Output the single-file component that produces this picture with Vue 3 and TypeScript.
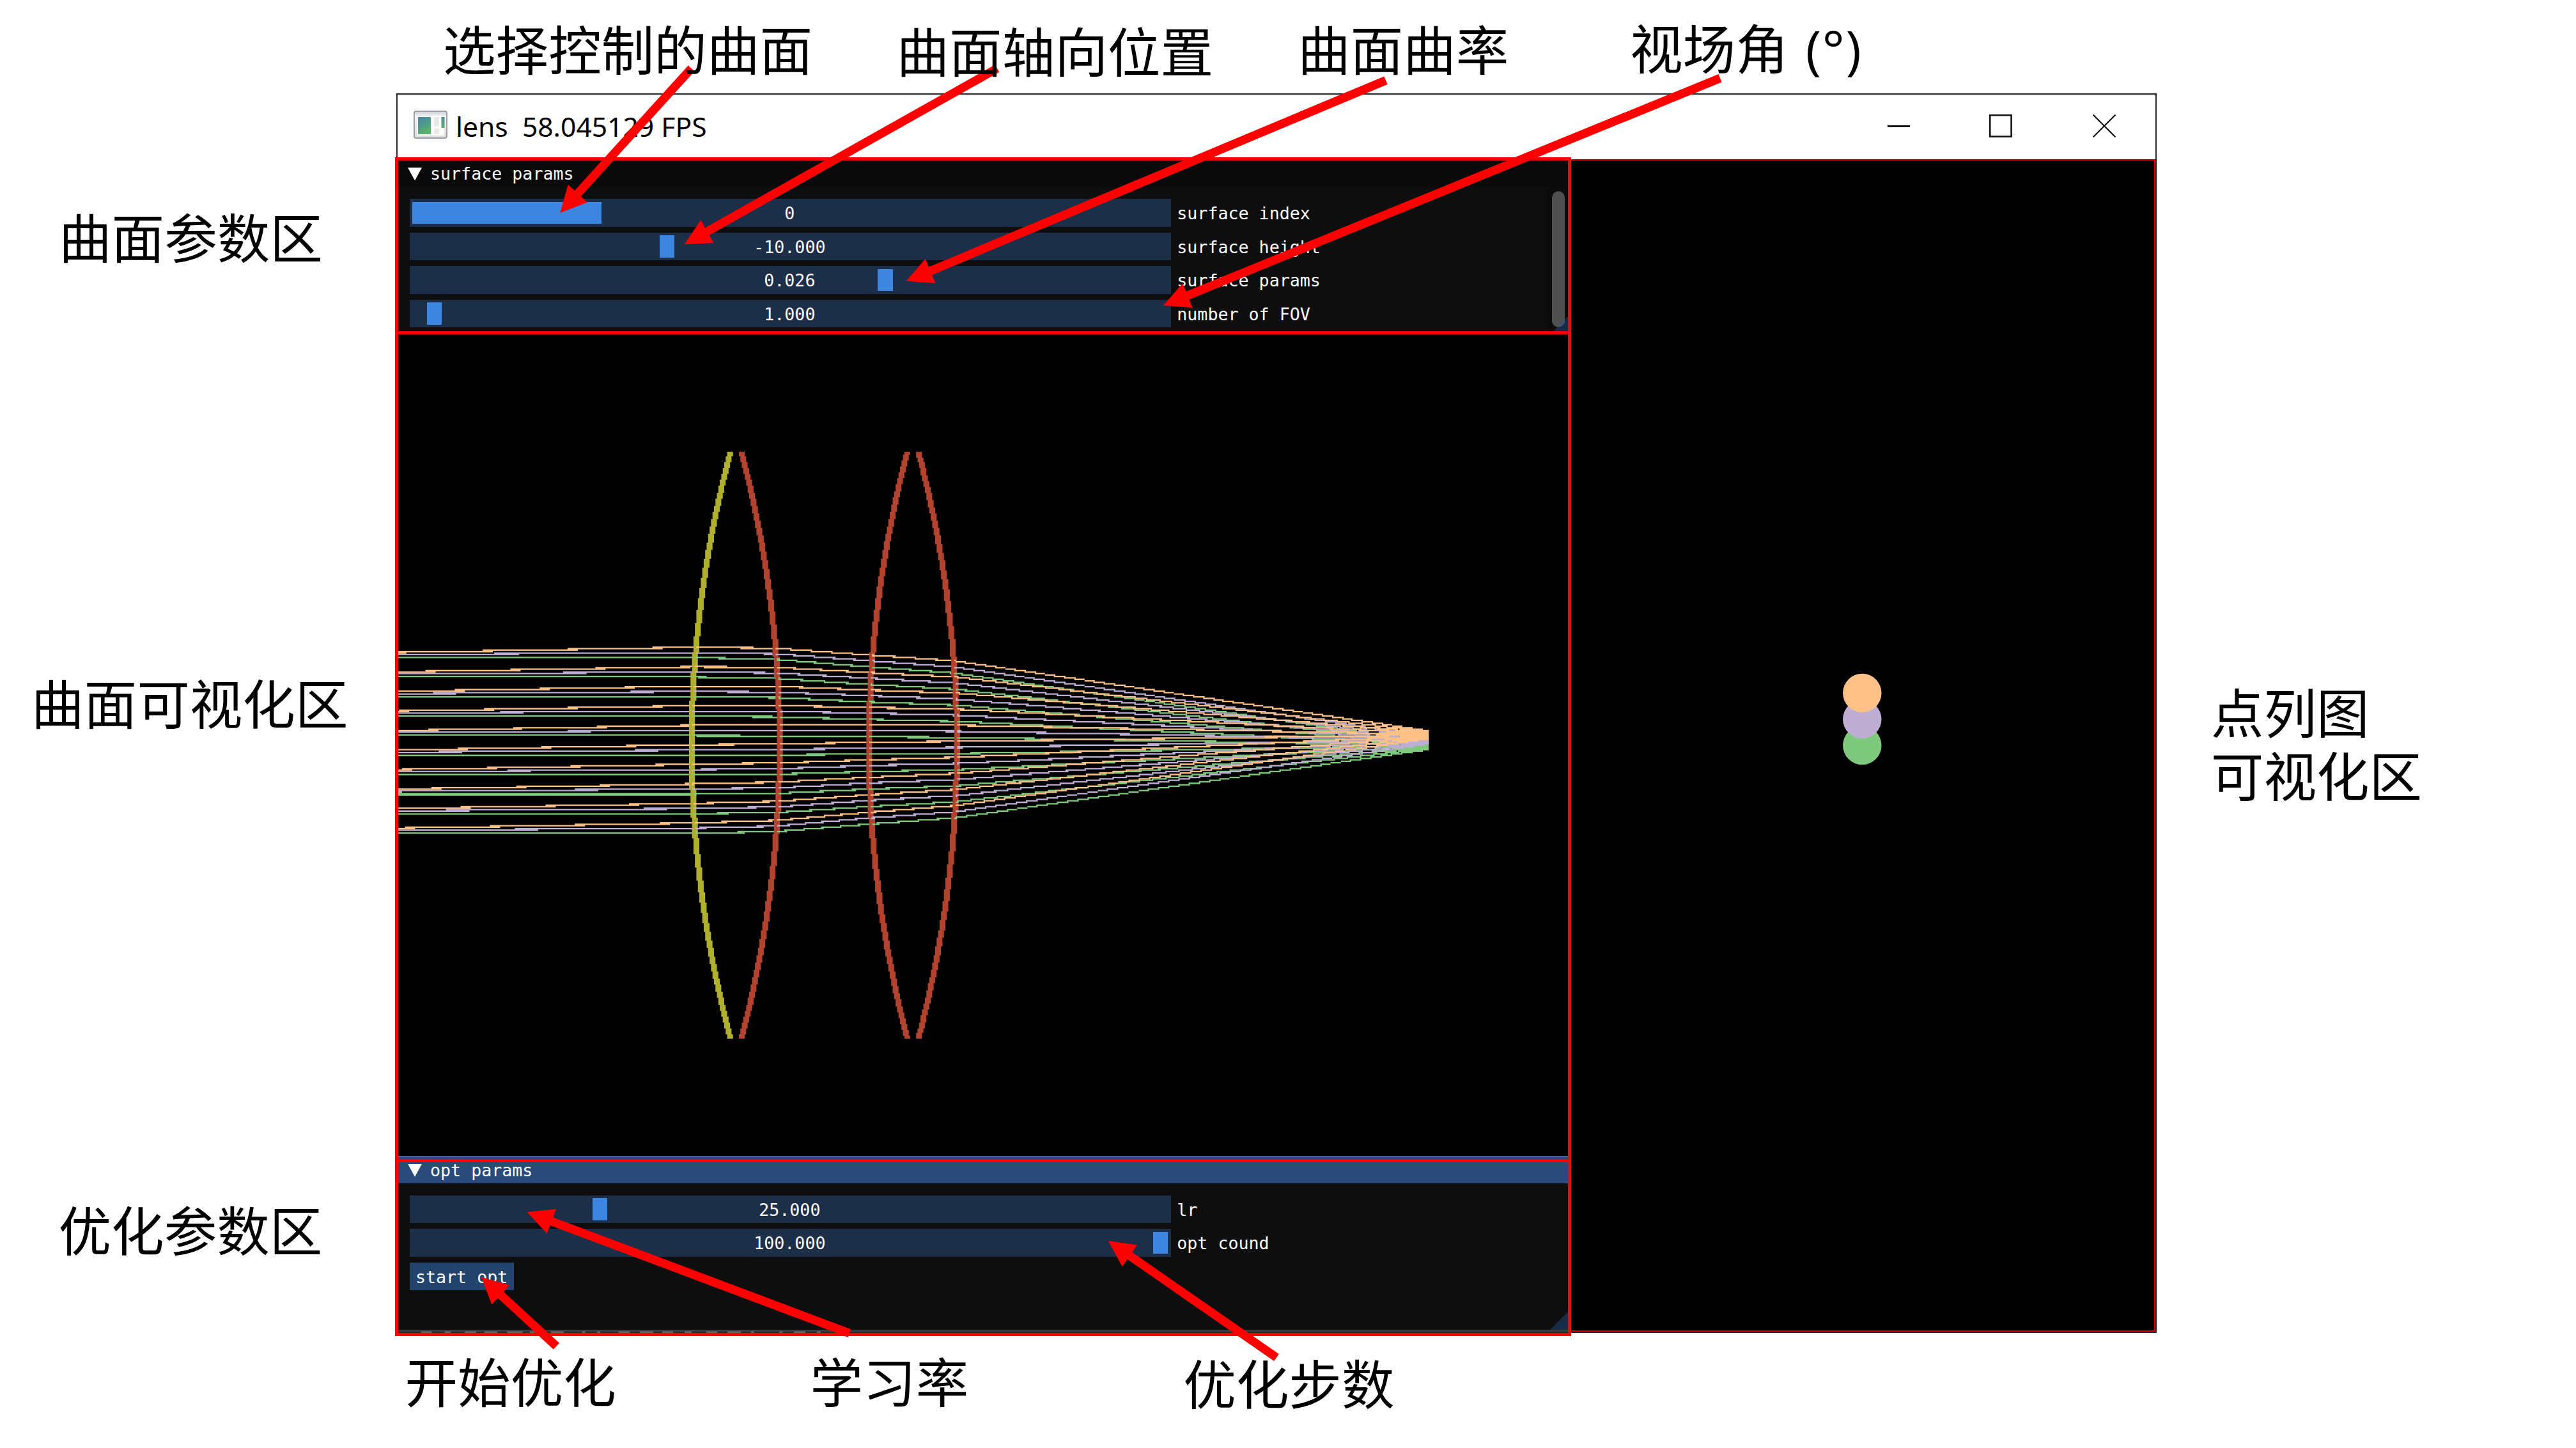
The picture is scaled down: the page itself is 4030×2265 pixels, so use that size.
<script setup lang="ts">
interface Slider {
  label: string
  value: string
  grabStart: number
  grabWidth: number
}

interface Point {
  x: number
  y: number
}

interface Callout {
  id: string
  lines: string[]
  latin?: string
  left: number
  middle: number
}

const windowTitle = 'lens  58.045129 FPS'

const surfaceSliders: Slider[] = [
  { label: 'surface index', value: '0', grabStart: 4.5, grabWidth: 296 },
  { label: 'surface height', value: '-10.000', grabStart: 391, grabWidth: 23.5 },
  { label: 'surface params', value: '0.026', grabStart: 732.8, grabWidth: 23.5 },
  { label: 'number of FOV', value: '1.000', grabStart: 27.4, grabWidth: 23.5 },
]

const optSliders: Slider[] = [
  { label: 'lr', value: '25.000', grabStart: 286.4, grabWidth: 23 },
  { label: 'opt cound', value: '100.000', grabStart: 1163.6, grabWidth: 23 },
]

// Optical scene, in the pixels of the 1200 x 800 render target
const axisY = 400.5
const aperture = 200
const rayCount = 10

const surfaces = [
  { mid: 200.9, sag: 26.2, color: '#b0b02e' },
  { mid: 260.9, sag: -26, color: '#b2432f' },
  { mid: 321.9, sag: 26, color: '#b2432f' },
  { mid: 381.9, sag: -26.2, color: '#b2432f' },
]

const fields = [
  { color: '#7fc97f', centers: [400.6, 400.6, 400.7, 400.7, 400.7, 400.7] },
  { color: '#beaed4', centers: [398.6, 397.1, 396.9, 396.5, 396.5, 396.9] },
  { color: '#fdc086', centers: [397.1, 393.6, 393.05, 392.6, 392.3, 393.3] },
]

const spreads = [60.05, 60.05, 58.8, 53.6, 49.5, 2.65]
const sensorX = 703.7

function surfaceX(index: number, y: number): number {
  const s = surfaces[index]
  const h = (y - axisY) / aperture
  return s.mid + s.sag * h * h
}

function lensPath(index: number): string {
  let d = ''
  for (let row = 200; row < 601; row++) {
    const x = Math.round(surfaceX(index, row + 0.5)) - 2
    d += `M${x} ${row}h4v1.04h-4z`
  }
  return d
}

function rasterLine(a: Point, b: Point): string {
  const reach = 0.56
  const slope = (b.y - a.y) / (b.x - a.x)
  const first = Math.floor(Math.min(a.y, b.y) - 1)
  const last = Math.ceil(Math.max(a.y, b.y) + 1)
  let d = ''
  for (let row = first; row <= last; row++) {
    const c = row + 0.5
    let from = a.x
    let to = b.x
    if (Math.abs(slope) < 1e-5) {
      if (Math.abs(a.y - c) > reach) continue
    } else {
      const p = a.x + (c - reach - a.y) / slope
      const q = a.x + (c + reach - a.y) / slope
      from = Math.max(a.x, Math.min(p, q))
      to = Math.min(b.x, Math.max(p, q))
    }
    from = Math.round(from)
    to = Math.round(to)
    if (to > from) d += `M${from} ${row}h${to - from}v1h${from - to}z`
  }
  return d
}

function node(field: number, ray: number, stage: number): Point {
  const t = (ray / (rayCount - 1)) * 2 - 1
  const y = fields[field].centers[stage] + t * spreads[stage]
  if (stage === 0) return { x: 0, y }
  if (stage === 5) return { x: sensorX, y }
  return { x: surfaceX(stage - 1, y), y }
}

const segments = [0, 1, 2, 3, 4].map((stage) =>
  fields.map((f, fi) => {
    let d = ''
    for (let r = 0; r < rayCount; r++) d += rasterLine(node(fi, r, stage), node(fi, r, stage + 1))
    return { color: f.color, d }
  }),
)

const lenses = surfaces.map((s, i) => ({ color: s.color, d: lensPath(i) }))

const spots = [
  { color: '#7fc97f', y: 400.6 },
  { color: '#beaed4', y: 382.7 },
  { color: '#fdc086', y: 364.8 },
]

const arrows: { tail: Point; tip: Point }[] = [
  { tail: { x: 1081.6, y: 107 }, tip: { x: 876.3, y: 333 } },
  { tail: { x: 1560, y: 107 }, tip: { x: 1070.7, y: 382.3 } },
  { tail: { x: 2168, y: 125.7 }, tip: { x: 1417.7, y: 439.8 } },
  { tail: { x: 2691, y: 122.3 }, tip: { x: 1820, y: 477.7 } },
  { tail: { x: 1329, y: 2085.5 }, tip: { x: 824.5, y: 1896 } },
  { tail: { x: 870.4, y: 2105.7 }, tip: { x: 753, y: 1997.7 } },
  { tail: { x: 1997, y: 2123.5 }, tip: { x: 1733.7, y: 1941 } },
]

function arrowPoints(a: { tail: Point; tip: Point }): string {
  const dx = a.tail.x - a.tip.x
  const dy = a.tail.y - a.tip.y
  const len = Math.hypot(dx, dy)
  const at = (along: number, across: number) =>
    `${(a.tip.x + (dx * along - dy * across) / len).toFixed(2)},${(a.tip.y + (dy * along + dx * across) / len).toFixed(2)}`
  return [at(0, 0), at(41, 20.5), at(41, 6.7), at(len, 6.7), at(len, -6.7), at(41, -6.7), at(41, -20.5)].join(' ')
}

const arrowShapes = arrows.map(arrowPoints)

const callouts: Callout[] = [
  { id: 'pick', lines: ['选择控制的曲面'], left: 693, middle: 79 },
  { id: 'axial', lines: ['曲面轴向位置'], left: 1402.5, middle: 82.5 },
  { id: 'curv', lines: ['曲面曲率'], left: 2030, middle: 79 },
  { id: 'fov', lines: ['视场角'], latin: ' (°)', left: 2550, middle: 77 },
  { id: 'params', lines: ['曲面参数区'], left: 92, middle: 373.4 },
  { id: 'view', lines: ['曲面可视化区'], left: 49, middle: 1102.6 },
  { id: 'optarea', lines: ['优化参数区'], left: 91.5, middle: 1926.5 },
  { id: 'start', lines: ['开始优化'], left: 633.5, middle: 2163 },
  { id: 'rate', lines: ['学习率'], left: 1267.6, middle: 2163 },
  { id: 'steps', lines: ['优化步数'], left: 1851.2, middle: 2166.3 },
  { id: 'spot', lines: ['点列图', '可视化区'], left: 3458.8, middle: 1116.5 },
]

// x offset and width of each sliver of text showing along the window's lower edge
const slivers = [
  [658.7, 16.6], [695.7, 9.5], [727, 18], [757.5, 20.4], [793.3, 24.2], [829, 7.6], [845, 9.5], [862, 20],
  [910.6, 5], [934, 5], [967.4, 18], [1001, 21], [1036, 17], [1071, 11], [1105, 17], [1138, 21], [1174.6, 5],
  [1219.3, 5], [1242, 18], [1278, 6],
]
</script>

<template>
  <main class="sheet">
    <section class="window">
      <header class="titlebar">
        <svg class="app-icon" viewBox="0 0 53 44">
          <defs>
            <linearGradient id="pane" x1="0" y1="0" x2="0.4" y2="1">
              <stop offset="0" stop-color="#4a7fb0" />
              <stop offset="0.5" stop-color="#4f9a8c" />
              <stop offset="1" stop-color="#5cb268" />
            </linearGradient>
            <linearGradient id="shell" x1="0" y1="0" x2="0" y2="1">
              <stop offset="0" stop-color="#c9cfd8" />
              <stop offset="0.2" stop-color="#f4f5f7" />
              <stop offset="1" stop-color="#d9dadc" />
            </linearGradient>
          </defs>
          <rect x="1" y="1" width="51" height="42" rx="3" fill="url(#shell)" stroke="#9b9fa4" stroke-width="2" />
          <rect x="5" y="8" width="43" height="31" fill="#fdfdfd" />
          <rect x="7" y="10" width="20" height="27" fill="url(#pane)" />
          <rect x="32" y="10" width="8" height="15" fill="#e9e9e6" />
          <rect x="32" y="28" width="8" height="9" fill="#ebebe9" />
          <rect x="43.5" y="10" width="5" height="17" fill="url(#pane)" />
        </svg>
        <h1 class="title">{{ windowTitle }}</h1>
        <div class="controls">
          <svg viewBox="0 0 36 36"><path d="M1 18.5h35" stroke-width="3" /></svg>
          <svg viewBox="0 0 36 36"><rect x="1.2" y="1.2" width="33.4" height="33.4" stroke-width="2.6" /></svg>
          <svg viewBox="0 0 36 36"><path d="M.5.5l35 35M35.5.5l-35 35" stroke-width="2.2" /></svg>
        </div>
      </header>

      <div class="client">
        <svg class="scene" viewBox="0 0 1200 800" preserveAspectRatio="none">
          <template v-for="(stage, i) in segments" :key="i">
            <path v-for="f in stage" :key="f.color" :d="f.d" :fill="f.color" />
            <path v-if="lenses[i]" :d="lenses[i].d" :fill="lenses[i].color" />
          </template>
          <circle v-for="s in spots" :key="s.color" cx="999.9" :cy="s.y" r="13.2" :fill="s.color" />
        </svg>

        <section class="panel surface">
          <header class="panel-title"><i class="caret"></i>surface params</header>
          <div class="panel-main">
            <div class="rows">
              <div v-for="s in surfaceSliders" :key="s.label" class="row">
                <div class="track">
                  <i class="grab" :style="{ left: s.grabStart + 'px', width: s.grabWidth + 'px' }"></i>
                  <span class="value">{{ s.value }}</span>
                </div>
                <span class="label">{{ s.label }}</span>
              </div>
            </div>
            <div class="scroll"><i class="thumb"></i></div>
          </div>
          <i class="grip"></i>
        </section>

        <section class="panel opt">
          <header class="panel-title active"><i class="caret"></i>opt params</header>
          <div class="rows">
            <div v-for="s in optSliders" :key="s.label" class="row">
              <div class="track">
                <i class="grab" :style="{ left: s.grabStart + 'px', width: s.grabWidth + 'px' }"></i>
                <span class="value">{{ s.value }}</span>
              </div>
              <span class="label">{{ s.label }}</span>
            </div>
            <button class="start" type="button">start opt</button>
          </div>
          <i class="grip"></i>
        </section>
      </div>
    </section>

    <svg class="markup" viewBox="0 0 4030 2265">
      <rect v-for="(s, i) in slivers" :key="i" :x="s[0]" y="2082.4" :width="s[1]" height="3" fill="#66666a" />
      <path d="M2458 250H3371V2082H2458" fill="none" stroke="#d40000" stroke-width="2.2" />
      <rect x="620.5" y="248.5" width="1835" height="272" fill="none" stroke="#f00" stroke-width="5" />
      <path d="M620.5 520V2087.5H2455.5V520M620 1815.4H2455" fill="none" stroke="#f00" stroke-width="5" />
      <polygon v-for="(p, i) in arrowShapes" :key="'a' + i" :points="p" fill="#f00" />
    </svg>

    <p
      v-for="c in callouts"
      :key="c.id"
      class="callout"
      :style="{ left: c.left + 'px', top: c.middle - 54.5 + 'px' }"
    >
      <span v-for="line in c.lines" :key="line" class="line">{{ line }}<span v-if="c.latin" class="latin">{{ c.latin }}</span></span>
    </p>
  </main>
</template>

<style>
body {
  margin: 0;
  background: #fff;
}
</style>

<style scoped>
.sheet {
  position: relative;
  width: 4030px;
  height: 2265px;
  overflow: hidden;
  background: #fff;
}

.window {
  position: absolute;
  left: 620px;
  top: 146px;
  width: 2754px;
  height: 1939px;
  box-sizing: border-box;
  border: 2px solid #23282b;
  display: flex;
  flex-direction: column;
  background: #000;
}

.titlebar {
  flex: none;
  height: 101px;
  padding: 0 62px 0 25px;
  display: flex;
  align-items: center;
  background: #fff;
}

.app-icon {
  width: 53px;
  height: 44px;
  margin-top: -8px;
}

.title {
  margin: -3px 0 0 13px;
  font: 400 42.6px/60px 'Noto Sans', 'Open Sans', sans-serif;
  color: #000;
  white-space: pre;
}

.controls {
  margin-left: auto;
  margin-top: -3px;
  display: flex;
  gap: 124px;
}

.controls svg {
  width: 36px;
  height: 36px;
  fill: none;
  stroke: #111;
}

.controls svg + svg + svg {
  margin-left: 2px;
}

.client {
  position: relative;
  flex: 1;
  display: flex;
  flex-direction: column;
  justify-content: space-between;
  background: #000;
  font: 26.65px/30px 'DejaVu Sans Mono', 'Liberation Mono', monospace;
  color: #fff;
}

.scene {
  position: absolute;
  left: 0.4px;
  top: 0;
  width: 2749.8px;
  height: 1831.2px;
}

.panel {
  position: relative;
  width: 1833.4px;
  box-sizing: border-box;
  background: #0e0e0e;
  overflow: hidden;
  display: flex;
  flex-direction: column;
}

.surface {
  height: 274px;
}

.opt {
  height: 275.5px;
  border-bottom: 3px solid #3c3c44;
}

.panel-title {
  flex: none;
  height: 43.5px;
  box-sizing: border-box;
  display: flex;
  align-items: center;
  gap: 13px;
  padding: 3px 0 0 16px;
  background: #0a0a0a;
}

.panel-title.active {
  background: #294a7a;
  border-top: 2px solid #55618a;
  padding-top: 1px;
}

.caret {
  width: 22px;
  height: 20px;
  background: #fff;
  clip-path: polygon(0 0, 100% 0, 50% 100%);
}

.panel-main {
  flex: 1;
  display: flex;
  justify-content: space-between;
}

.rows {
  padding: 18.5px 0 0 18.6px;
  display: flex;
  flex-direction: column;
  align-items: flex-start;
  gap: 9px;
}

.row {
  display: flex;
  align-items: center;
  gap: 9.2px;
  height: 43.6px;
}

.track {
  position: relative;
  width: 1191.5px;
  height: 43.6px;
  box-sizing: border-box;
  padding-right: 2px;
  display: flex;
  align-items: center;
  justify-content: center;
  background: #1d2e49;
}

.grab {
  position: absolute;
  top: 4.5px;
  bottom: 4.5px;
  background: #3d85e0;
}

.value {
  position: relative;
  padding-top: 3px;
}

.label {
  padding-top: 3px;
}

.scroll {
  width: 35px;
  background: #0b0b0b;
}

.thumb {
  display: block;
  width: 20.5px;
  height: 213px;
  margin: 6px 0 0 7.5px;
  border-radius: 10px;
  background: #4f4f4f;
}

.grip {
  position: absolute;
  right: 0;
  bottom: 0;
  width: 30px;
  height: 31px;
  background: rgba(38, 92, 158, 0.4);
  clip-path: polygon(100% 0, 100% 100%, 0 100%);
}

.start {
  height: 43.8px;
  width: 163px;
  padding: 3px 0 0;
  border: 0;
  background: #23456d;
  color: #fff;
  font: inherit;
}

.markup {
  position: absolute;
  inset: 0;
  width: 4030px;
  height: 2265px;
}

.callout {
  position: absolute;
  margin: 0;
  display: flex;
  flex-direction: column;
  font: 400 82.6px/99px 'Noto Sans CJK SC', sans-serif;
  color: #000;
  white-space: pre;
}

.latin {
  margin-left: 4px;
  letter-spacing: 1.5px;
  font-family: 'Open Sans', 'Noto Sans', sans-serif;
}
</style>
